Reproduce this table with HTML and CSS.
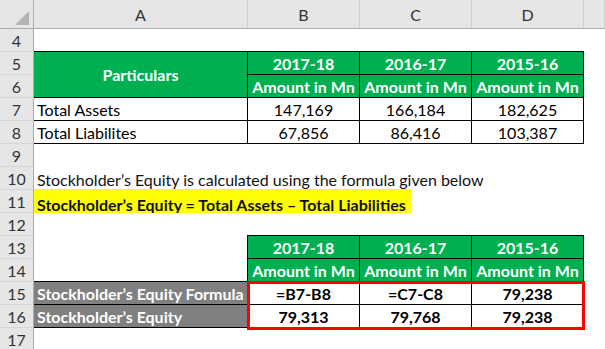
FILE: index.html
```html
<!DOCTYPE html>
<html lang="en">
<head>
<meta charset="utf-8">
<title>Stockholder's Equity</title>
<link rel="stylesheet" href="styles.css">
</head>
<body>
<div class="sheet">
  <div class="corner"><svg width="14" height="14" viewBox="0 0 14 14"><polygon points="14,0 14,14 0,14" fill="#b4b4b4"/></svg></div>
  <div class="ch">A</div><div class="ch">B</div><div class="ch">C</div><div class="ch">D</div><div class="ch">&nbsp;</div>

  <div class="rh">4</div><div class="c"></div><div class="c"></div><div class="c"></div><div class="c"></div><div class="c"></div>

  <div class="rh">5</div>
  <div class="c g b t span2 mid">Particulars</div>
  <div class="c g b t">2017-18</div><div class="c g b t">2016-17</div><div class="c g b t">2015-16</div><div class="c"></div>

  <div class="rh">6</div>
  <div class="c g b">Amount in Mn</div><div class="c g b">Amount in Mn</div><div class="c g b">Amount in Mn</div><div class="c"></div>

  <div class="rh">7</div>
  <div class="c b">Total Assets</div><div class="c b num">147,169</div><div class="c b num">166,184</div><div class="c b num">182,625</div><div class="c"></div>

  <div class="rh">8</div>
  <div class="c b">Total Liabilites</div><div class="c b num">67,856</div><div class="c b num">86,416</div><div class="c b num">103,387</div><div class="c"></div>

  <div class="rh">9</div><div class="c"></div><div class="c"></div><div class="c"></div><div class="c"></div><div class="c"></div>

  <div class="rh">10</div>
  <div class="c wide">Stockholder’s Equity is calculated using the formula given below</div>

  <div class="rh">11</div>
  <div class="c wide flush"><span class="hl">Stockholder’s Equity = Total Assets – Total Liabilities</span></div>

  <div class="rh">12</div><div class="c"></div><div class="c"></div><div class="c"></div><div class="c"></div><div class="c"></div>

  <div class="rh">13</div>
  <div class="c"></div>
  <div class="c g b tl">2017-18</div><div class="c g b t">2016-17</div><div class="c g b t">2015-16</div><div class="c"></div>

  <div class="rh">14</div>
  <div class="c"></div>
  <div class="c g b l">Amount in Mn</div><div class="c g b">Amount in Mn</div><div class="c g b">Amount in Mn</div><div class="c"></div>

  <div class="rh">15</div>
  <div class="c gr b t">Stockholder’s Equity Formula</div>
  <div class="c b num bold">=B7-B8</div><div class="c b num bold">=C7-C8</div><div class="c b num bold">79,238</div><div class="c"></div>

  <div class="rh">16</div>
  <div class="c gr b">Stockholder’s Equity</div>
  <div class="c b num bold">79,313</div><div class="c b num bold">79,768</div><div class="c b num bold">79,238</div><div class="c"></div>

  <div class="rh">17</div><div class="c"></div><div class="c"></div><div class="c"></div><div class="c"></div><div class="c"></div>

  <div class="redbox"></div>
</div>
</body>
</html>
```

FILE: styles.css
```css
* { box-sizing: border-box; }

body {
  margin: 0;
  background: #fff;
  font-family: Lato, "Open Sans", sans-serif;
  font-size: 16px;
  color: #000;
}

.sheet {
  position: relative;
  display: grid;
  grid-template-columns: 34px 214px 112px 112px 112px 1fr;
  grid-template-rows: 29px repeat(14, 23px);
  width: 605px;
  height: 349px;
  overflow: hidden;
}

.corner {
  background: #e6e6e6;
  border-right: 1px solid #ababab;
  border-bottom: 1px solid #ababab;
  display: flex;
  justify-content: flex-end;
  align-items: flex-end;
  padding: 0 4px 3px 0;
}

.ch {
  background: #e6e6e6;
  border-right: 1px solid #cfcfcf;
  border-bottom: 1px solid #ababab;
  display: flex;
  align-items: center;
  justify-content: center;
  color: #333;
}

.rh {
  background: #e6e6e6;
  border-right: 1px solid #ababab;
  border-bottom: 1px solid #d6d6d6;
  display: flex;
  align-items: center;
  justify-content: center;
  color: #333;
}

.c {
  display: flex;
  align-items: flex-end;
  padding: 0 3px 0;
  line-height: 20px;
  white-space: nowrap;
  min-width: 0;
  background: #fff;
}

.b {
  border-right: 1px solid #000;
  border-bottom: 1px solid #000;
}

.t { box-shadow: 0 -1px 0 #000; }
.l { box-shadow: -1px 0 0 #000; }
.tl { box-shadow: 0 -1px 0 #000, -1px 0 0 #000, -1px -1px 0 #000; }

.g {
  background: #00b050;
  color: #fff;
  font-weight: 700;
  justify-content: center;
}

.gr {
  background: #808080;
  color: #fff;
  font-weight: 700;
}

.span2 { grid-row: span 2; }
.mid { align-items: center; }

.num { justify-content: center; }
.bold { font-weight: 700; }

.wide {
  grid-column: span 5;
  color: #111;
}

.flush { padding: 0; }

.hl {
  background: #ffff00;
  font-weight: 700;
  align-self: stretch;
  display: flex;
  align-items: flex-end;
  padding: 0 5px 0 3px;
  margin: -1px 0 -2px;
}

.redbox {
  position: absolute;
  grid-column: 3 / 6;
  grid-row: 13 / 15;
  top: -1px;
  left: -1px;
  right: -1px;
  bottom: -2px;
  border: 3px solid #ff0000;
  pointer-events: none;
}
```
